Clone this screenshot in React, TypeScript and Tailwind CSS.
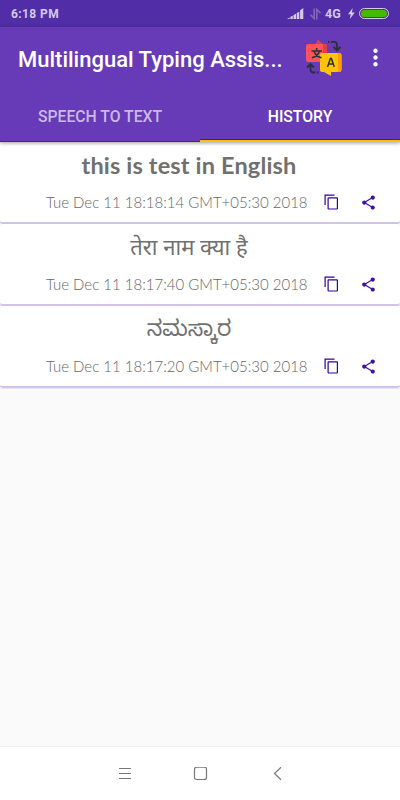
import { MdMoreVert, MdShare } from "react-icons/md";

type HistoryItem = {
  id: number;
  text: string;
  date: string;
  textClass: string;
};

const items: HistoryItem[] = [
  {
    id: 1,
    text: "this is test in English",
    date: "Tue Dec 11 18:18:14 GMT+05:30 2018",
    textClass: "font-['Lato',sans-serif] font-bold text-[23.5px] tracking-[0.16px]",
  },
  {
    id: 2,
    text: "तेरा नाम क्या है",
    date: "Tue Dec 11 18:17:40 GMT+05:30 2018",
    textClass: "font-['Noto_Sans','Noto_Sans_Devanagari',sans-serif] text-[22px] pb-[4px]",
  },
  {
    id: 3,
    text: "ನಮಸ್ಕಾರ",
    date: "Tue Dec 11 18:17:20 GMT+05:30 2018",
    textClass: "font-['Noto_Sans','Noto_Sans_Kannada',sans-serif] text-[22px] pb-[7px]",
  },
];

function StatusBar() {
  return (
    <div className="flex h-[27px] items-center justify-between bg-[#512da8] pl-[11px] pr-[11px] text-[#d5caec]">
      <span className="pt-px text-[12px] font-bold leading-none tracking-[0.4px]">6:18 PM</span>
      <div className="flex items-center">
        <svg width="17" height="12" viewBox="0 0 17 12" fill="currentColor">
          <path d="M0 11 L2.6 9.5 V11Z M3.4 8.8 L5.8 7.7 V11H3.4Z M6.5 7 L9 5.7 V11H6.5Z M9.7 5 L12.3 3.7 V11H9.7Z M13.1 2.2 L16.3 0 V11H13.1Z" />
        </svg>
        <svg className="ml-[6px]" width="11" height="12" viewBox="0 0 11 12" fill="none" stroke="#8067bf" strokeWidth="1.6">
          <path d="M4.2 .5V10.5L.5 6.8M6.8 11.5V1.5L10.5 5.2" />
        </svg>
        <span className="ml-[4px] w-[17px] pt-px text-[12.5px] font-bold leading-none">4G</span>
        <svg className="ml-[6px]" width="7" height="11" viewBox="0 0 7 11" fill="currentColor">
          <path d="M4.7 0 0 6.3h2.8L1.8 11 6.8 4.5H3.9Z" />
        </svg>
        <div className="ml-[4px] h-[11px] w-[30px] rounded-full border border-[#d5caec] p-[1px]">
          <div className="h-full w-full rounded-full bg-[#44bb00]" />
        </div>
      </div>
    </div>
  );
}

function TranslateIcon() {
  return (
    <svg width="38" height="38" viewBox="0 0 38 38" fill="none">
      <path d="M3 4H11L13 0 17 4H20Q22 4 22 6V20Q22 22 20 22H3Q1 22 1 20V6Q1 4 3 4Z" fill="#ff5259" />
      <path d="M12 0 17 4H20Q22 4 22 6V20Q22 22 20 22H18V4H12Z" fill="#e13c42" />
      <path d="M17 13H34Q36.5 13 36.5 15V30Q36.5 32 34 32H26V36L19 32H17Q15 32 15 30V15Q15 13 17 13Z" fill="#ffc408" />
      <path d="M31 13H34Q36.5 13 36.5 15V30Q36.5 32 34 32H31Q33 32 33 30V15Q33 13 31 13Z" fill="#ff9f00" />
      <path d="M11.7 8V10.5M6.5 11H17M14.5 11C13.5 14.5 10.5 16.8 7 17.8M9 11C10 14.5 13 16.8 16.5 17.8" stroke="#273238" strokeWidth="1.5" />
      <path d="M22.5 27 25.4 18.5h1L29.3 27M23.5 24H28.3" stroke="#273238" strokeWidth="1.5" />
      <path d="M23 1.8H24.5M26 1.8H29Q32 1.8 32 5V9M28.5 7 32 10.5 35.5 7" stroke="#273238" strokeWidth="1.8" />
      <path d="M13.5 32.5H12M10.5 32.5H8.5Q5.5 32.5 5.5 29.5V25M2 27.5 5.5 24 9 27.5" stroke="#273238" strokeWidth="1.8" />
    </svg>
  );
}

function CopyIcon() {
  return (
    <svg width="15" height="16" viewBox="0 0 15 16" fill="none" stroke="currentColor" strokeWidth="1.2">
      <path d="M1.1 11V1.1H10.5" />
      <rect x="4.1" y="3.8" width="9.3" height="11.2" rx=".5" />
    </svg>
  );
}

function HistoryCard({ item }: { item: HistoryItem }) {
  return (
    <div className="h-[82px] rounded-[3px] border-b-2 border-[#d1c4e9] bg-white pt-[7px] shadow-[0_1px_1px_rgba(103,58,183,0.12)]">
      <div className="flex h-[34px] items-center justify-center pr-[22px] text-[#707070]">
        <span className={`whitespace-nowrap leading-none ${item.textClass}`}>{item.text}</span>
      </div>
      <div className="flex h-[38px] items-center pl-[46px]">
        <span className="w-[262px] whitespace-nowrap font-['Lato',sans-serif] text-[15px] font-light text-[#666666]">
          {item.date}
        </span>
        <button className="ml-[16px] text-[#3300a0]" aria-label="Copy">
          <CopyIcon />
        </button>
        <button className="ml-[21px] text-[#3d12a5]" aria-label="Share">
          <MdShare size={17} />
        </button>
      </div>
    </div>
  );
}

export default function App() {
  return (
    <div className="flex h-[800px] w-[400px] flex-col overflow-hidden bg-[#fafafa] font-['Roboto',sans-serif]">
      <StatusBar />

      <header className="z-10 bg-[#673ab7] shadow-[0_1px_4px_rgba(0,0,0,0.4)]">
        <div className="flex h-[64px] items-center pl-[18px]">
          <h1 className="w-[264px] whitespace-nowrap pt-px text-[22px] font-medium text-white">Multilingual Typing Assis...</h1>
          <div className="ml-[23px]">
            <TranslateIcon />
          </div>
          <MdMoreVert className="mb-[3px] ml-[19px] text-white" size={27} />
        </div>
        <div className="flex h-[51px] text-[15.75px] font-medium">
          <button className="flex-1 border-b border-[#5018ae] pt-[2px] text-[#cbb9e8]">SPEECH TO TEXT</button>
          <button className="flex flex-1 flex-col text-white">
            <span className="flex w-full flex-1 items-center justify-center pt-[4px]">HISTORY</span>
            <span className="h-[3px] w-full border-t border-[#4712a6] bg-[#ffc107]" />
          </button>
        </div>
      </header>

      <main className="flex-1">
        {items.map((item) => (
          <HistoryCard key={item.id} item={item} />
        ))}
      </main>

      <nav className="flex h-[54px] items-center border-t border-[#eeeeee] bg-white pl-[118px] pt-px text-[#777777]">
        <svg width="14" height="14" viewBox="0 0 14 14" stroke="currentColor">
          <path d="M1 1.5H13M1 6.5H13M1 11.5H13" />
        </svg>
        <svg className="ml-[61px]" width="15" height="14" viewBox="0 0 15 14" fill="none" stroke="currentColor" strokeWidth="1.2">
          <rect x="1.5" y=".2" width="12" height="12.3" rx="2" />
        </svg>
        <svg className="ml-[64px]" width="10" height="14" viewBox="0 0 10 14" fill="none" stroke="currentColor" strokeWidth="1.2">
          <path d="M9 .3 2.5 6.5 9 12.8" />
        </svg>
      </nav>
    </div>
  );
}
